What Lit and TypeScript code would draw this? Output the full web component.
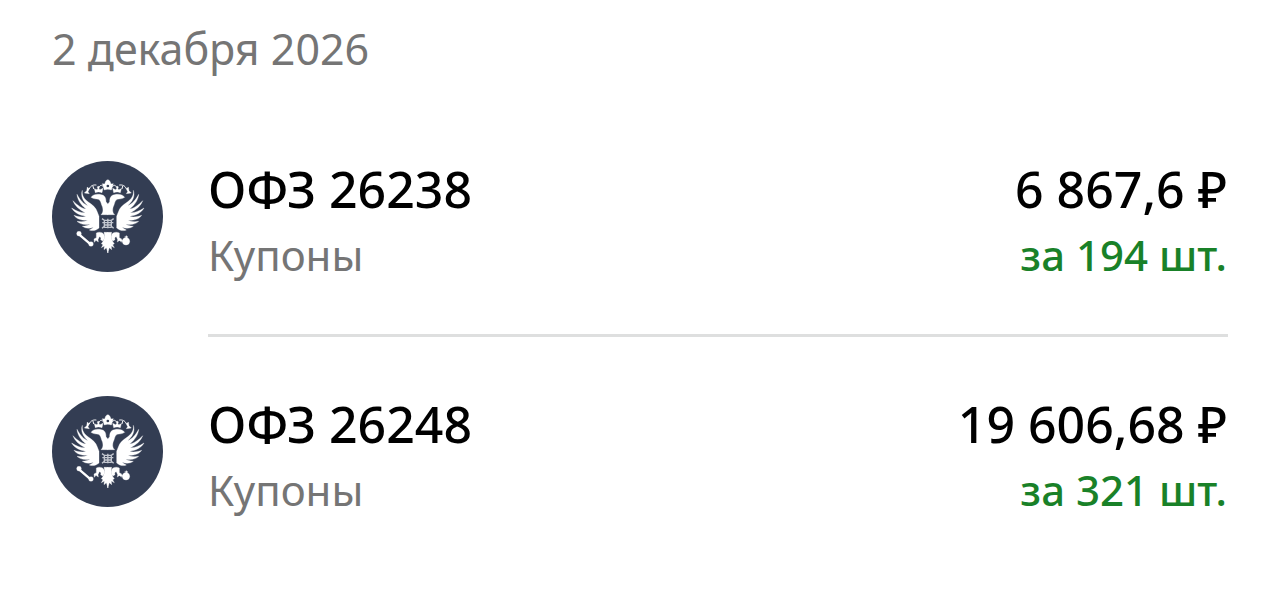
import { LitElement, html, svg, css } from "lit";
import { customElement, property } from "lit/decorators.js";

interface Payment {
  name: string;
  kind: string;
  amount: string;
  count: string;
}

const payments: Payment[] = [
  { name: "ОФЗ 26238", kind: "Купоны", amount: "6 867,6 ₽", count: "за 194 шт." },
  { name: "ОФЗ 26248", kind: "Купоны", amount: "19 606,68 ₽", count: "за 321 шт." },
];

// One half of the eagle: wing feathers, head, side crown and ribbon.
const half = () => svg`
  <path d="M103 103 C101 118 108 129 121 138 C135 148 144 155 148 168 L153 181 V216
    C145 223 134 226 124 222 C130 219 134 217 136 214 C124 219 111 217 103 211
    C113 210 121 208 126 204 C110 208 95 204 87 196 C101 198 112 197 119 193
    C100 194 84 188 78 178 C91 183 106 185 114 181 C94 178 78 169 71 156
    C86 166 101 171 112 170 C93 161 80 148 75 134 C88 148 103 158 114 159
    C98 147 88 130 87 115 C96 132 107 145 120 149 C105 137 97 119 103 103 Z"/>
  <path d="M129 124 C135 115 148 113 160 116 C171 118 174 126 174 137 L180 145
    V176 H159 C167 169 166 157 161 147 C158 138 157 132 151 130 C145 128 137 130 129 124 Z"/>
  <path d="M139 98 L147 101 L151 95 L156 101 L165 97 L162 110 C155 107 148 107 142 110 Z"/>
  <circle cx="151" cy="94" r="3"/>
  <path d="M118 93 L124 99 L120 107 L124 113 L109 111 L116 104 Z"/>
  <path class="line" d="M124 98 C128 88 137 86 144 87 M135 91 L137 98 M154 92 C158 86 161 87 165 91"/>
  <path d="M145 231 C152 227 164 228 168 236 C171 242 169 251 164 255 L158 251
    C160 246 158 242 154 242 L150 251 L151 258 L144 253 L139 259 L138 249 L145 245 Z"/>
  <path d="M180 229 H168 C172 242 169 253 160 263 L165 266 L160 275 L169 270 L168 281 L175 275 L180 291 Z"/>
`;

@customElement("state-emblem")
class StateEmblem extends LitElement {
  static styles = css`
    :host { display: block; }
    svg { display: block; width: 100%; height: 100%; }
    .disc { fill: #333d53; }
    .eagle { fill: #fff; stroke: #fff; stroke-width: 1; stroke-linejoin: round; }
    .line { fill: none; stroke: #fff; stroke-width: 3; stroke-linecap: round; }
    .rod { stroke-width: 7; }
    .shield { fill: #333d53; }
    .rider { fill: none; stroke: #c3c7d0; stroke-width: 4; }
  `;

  render() {
    return html`<svg viewBox="12 15 333 333" aria-hidden="true">
      <circle class="disc" cx="178.500" cy="181.500" r="166.500"></circle>
      <g class="eagle">
        <g>${half()}</g>
        <g transform="translate(359 0) scale(-1 1)">${half()}</g>
        <path d="M163 83 L170 84 L173 76 H186 L189 84 L196 83 L190 102 C183 99 176 99 169 102 Z"></path>
        <circle cx="179.500" cy="76" r="5"></circle>
        <path class="line rod" d="M93 235 L128 265"></path>
        <circle cx="93" cy="233" r="7"></circle>
        <circle cx="129" cy="264" r="7"></circle>
        <circle cx="234" cy="256" r="11"></circle>
        <path class="line" d="M235 240 V247 M231 243 H239 M213 252 L225 255"></path>
      </g>
      <path class="shield" d="M156 181 H203 V220 L180 227 L156 220 Z"></path>
      <circle class="shield" cx="179.500" cy="90" r="4"></circle>
      <path class="rider" d="M162 188 L169 193 H190 L197 188 M163 200 H196 M169 192 V211 L162 217 M190 192 V211 L197 217 M169 207 H190 M169 214 H190 M179.500 188 V217"></path>
    </svg>`;
  }
}

@customElement("payment-row")
class PaymentRow extends LitElement {
  @property({ attribute: false }) payment!: Payment;

  static styles = css`
    :host {
      display: grid;
      grid-template-columns: 111px 1fr;
      column-gap: 45px;
    }
    .emblem { width: 111px; height: 111px; margin-top: 59px; }
    .body {
      display: flex;
      justify-content: space-between;
      gap: 24px;
      padding: 55px 0 49px;
      border-bottom: 3px solid var(--divider, #dedfdf);
      white-space: nowrap;
    }
    .value { text-align: right; padding-right: 1px; }
    .main, .sub { margin: 0; }
    .main { margin-bottom: 3px; font-size: 50px; line-height: 65px; font-weight: 500; color: #000; }
    .sub { font-size: 42px; line-height: 60px; color: #757575; }
    .count { color: #198128; font-weight: 500; }
  `;

  render() {
    const p = this.payment;
    return html`
      <state-emblem class="emblem"></state-emblem>
      <div class="body">
        <div>
          <p class="main">${p.name}</p>
          <p class="sub">${p.kind}</p>
        </div>
        <div class="value">
          <p class="main">${p.amount}</p>
          <p class="sub count">${p.count}</p>
        </div>
      </div>
    `;
  }
}

@customElement("app-root")
class AppRoot extends LitElement {
  static styles = css`
    :host {
      display: block;
      box-sizing: border-box;
      min-height: 100vh;
      padding: 19px 52px 0;
      background: #fff;
      font-family: "Noto Sans", "Open Sans", sans-serif;
    }
    h2 {
      margin: 0 0 23px;
      font-size: 43px;
      line-height: 60px;
      font-weight: 400;
      color: #757575;
    }
    ul { margin: 0; padding: 0; list-style: none; }
    li:last-child { --divider: transparent; }
  `;

  render() {
    return html`
      <h2>2 декабря 2026</h2>
      <ul>
        ${payments.map((p) => html`<li><payment-row .payment=${p}></payment-row></li>`)}
      </ul>
    `;
  }
}
